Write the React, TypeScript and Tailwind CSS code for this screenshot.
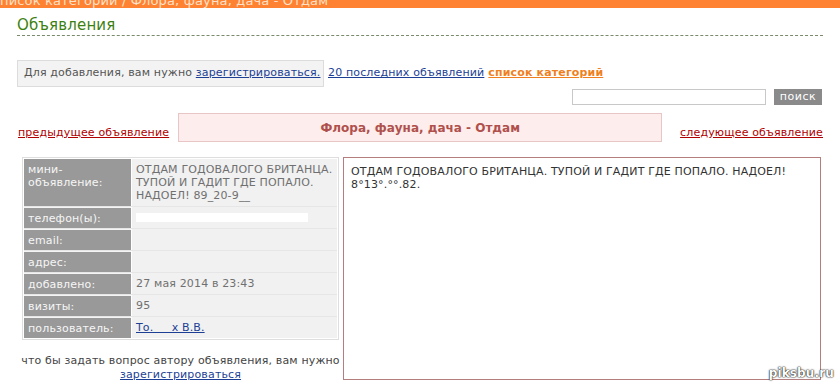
import React from 'react';

const ROWS: { label: string; value: React.ReactNode; tall?: boolean }[] = [
  {
    label: 'мини-\nобъявление:',
    value: 'ОТДАМ ГОДОВАЛОГО БРИТАНЦА. ТУПОЙ И ГАДИТ ГДЕ ПОПАЛО. НАДОЕЛ! 89_20-9__',
    tall: true,
  },
  { label: 'телефон(ы):', value: <span className="inline-block w-[172px] h-[9px] bg-white" /> },
  { label: 'email:', value: '' },
  { label: 'адрес:', value: '' },
  { label: 'добавлено:', value: '27 мая 2014 в 23:43' },
  { label: 'визиты:', value: '95' },
  {
    label: 'пользователь:',
    value: <a href="#" className="text-[#1c3f95] underline">То.&nbsp;&nbsp;&nbsp;&nbsp;&nbsp;х В.В.</a>,
  },
];

const App: React.FC = () => {
  return (
    <div className="w-[840px] h-[386px] overflow-hidden bg-white text-[11px] tracking-[0.15px] relative" style={{ fontFamily: '"DejaVu Sans", Verdana, sans-serif' }}>
      {/* top crumbs bar, clipped like in the screenshot */}
      <div className="h-[8px] bg-[#fe8232] overflow-hidden">
        <div className="mt-[-7px] text-[13px] leading-[15px] text-[#ffe0c8] whitespace-nowrap">
          писок категорий / Флора, фауна, дача - Отдам
        </div>
      </div>

      <div className="px-[17px]">
        <div className="pt-[10px] pb-[2px] border-b border-dashed border-[#7a8a6a] text-[15px] leading-[15px] text-[#3d8012]">
          Объявления
        </div>

        <div className="flex items-center mt-[24px] gap-[4px]">
          <div className="w-[307px] h-[27px] flex items-center pl-[6px] bg-[#f3f3f3] border border-[#dcdcdc] text-[#555] whitespace-nowrap">
            Для добавления, вам нужно&nbsp;<a href="#" className="text-[#1c3f95] underline">зарегистрироваться.</a>
          </div>
          <a href="#" className="text-[#1c3f95] underline">20 последних объявлений</a>
          <a href="#" className="text-[#f07f1e] underline font-bold">список категорий</a>
        </div>

        <div className="flex justify-end items-center gap-[8px] mt-[2px] pr-[1px]">
          <input className="w-[194px] h-[16px] border border-[#c8c8c8] bg-white" />
          <button className="w-[48px] h-[16px] bg-[#8a8a8a] text-white text-[11px] leading-[16px] tracking-[0.5px]">поиск</button>
        </div>

        <div className="flex items-end mt-[8px]">
          <a href="#" className="ml-[1px] text-[#b00000] underline whitespace-nowrap pb-[1px]">предыдущее объявление</a>
          <div className="w-[484px] h-[29px] ml-[9px] flex items-center justify-center bg-[#fdeded] border border-[#e9c6c6] text-[12px] tracking-normal font-bold text-[#b0504c]">
            Флора, фауна, дача - Отдам
          </div>
          <a href="#" className="ml-auto text-[#b00000] underline whitespace-nowrap pb-[1px]">следующее объявление</a>
        </div>

        <div className="flex mt-[15px] gap-[4px]">
          <div className="w-[317px] flex flex-col items-center ml-[5px]">
            <div className="w-[317px] border border-[#dedede] p-[1px] text-[#f6f6f6]">
              {ROWS.map((r, i) => (
                <div key={i} className={`flex ${i > 0 ? 'border-t border-[#e6e6e6]' : ''}`}>
                  <div className={`w-[107px] shrink-0 bg-[#999999] px-[4px] whitespace-pre-line leading-[13px] ${r.tall ? 'pt-[4px] h-[47px]' : 'h-[21px] flex items-center'} ${i > 0 ? 'border-t border-[#f4f4f4]' : ''}`}>
                    {r.label}
                  </div>
                  <div className={`flex-1 ml-[1px] bg-[#f1f1f1] px-[4px] text-[#707070] leading-[13px] ${r.tall ? 'pt-[4px]' : 'flex items-center'}`}>
                    {r.value}
                  </div>
                </div>
              ))}
            </div>
            <div className="mt-[14px] text-center text-[#444] leading-[14px] whitespace-nowrap">
              что бы задать вопрос автору объявления, вам нужно
              <br />
              <a href="#" className="text-[#1c3f95] underline">зарегистрироваться</a>
            </div>
          </div>

          <div className="w-[478px] h-[223px] border border-[#b47e7e] px-[7px] pt-[7px] text-[#333] leading-[13px]">
            ОТДАМ ГОДОВАЛОГО БРИТАНЦА. ТУПОЙ И ГАДИТ ГДЕ ПОПАЛО. НАДОЕЛ!
            <br />
            8°13°.°°.82.
          </div>
        </div>
      </div>

      <div className="absolute right-[6px] bottom-[4px] text-[12px] font-bold text-white" style={{ textShadow: '0 0 2px #000, 0 0 1px #000' }}>
        piksbu.ru
      </div>
    </div>
  );
};

export default App;
